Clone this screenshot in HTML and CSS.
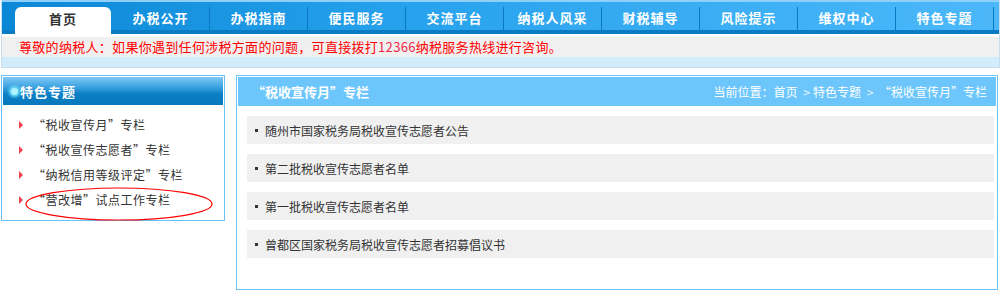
FILE: index.html
```html
<!DOCTYPE html>
<html lang="zh-CN">
<head>
    <meta charset="UTF-8">
    <title>特色专题 - “税收宣传月”专栏</title>
    <link rel="stylesheet" href="styles.css">
</head>
<body>
    <div class="header">
        <ul class="nav">
            <li class="active">首页</li>
            <li>办税公开</li>
            <li>办税指南</li>
            <li>便民服务</li>
            <li>交流平台</li>
            <li>纳税人风采</li>
            <li>财税辅导</li>
            <li>风险提示</li>
            <li>维权中心</li>
            <li>特色专题</li>
        </ul>
        <div class="notice">尊敬的纳税人：如果你遇到任何涉税方面的问题，可直接拨打<span class="hotline">12366</span>纳税服务热线进行咨询。</div>
        <div class="notice-strip"></div>
    </div>

    <div class="main">
        <div class="side">
            <div class="side-title"><span class="dot"></span>特色专题</div>
            <ul class="side-list">
                <li>“税收宣传月”专栏</li>
                <li>“税收宣传志愿者”专栏</li>
                <li>“纳税信用等级评定”专栏</li>
                <li class="marked">“营改增”试点工作专栏
                    <svg class="circle" width="190" height="36" viewBox="0 0 190 36">
                        <ellipse cx="95" cy="18" rx="93" ry="16" fill="none" stroke="#f00" stroke-width="1.2"/>
                    </svg>
                </li>
            </ul>
        </div>

        <div class="content">
            <div class="content-title">
                <span class="title">“税收宣传月”专栏</span>
                <span class="crumb">当前位置：首页 <span class="sep">&gt;</span>特色专题 <span class="sep">&gt;</span> “税收宣传月”专栏</span>
            </div>
            <ul class="article-list">
                <li>随州市国家税务局税收宣传志愿者公告</li>
                <li>第二批税收宣传志愿者名单</li>
                <li>第一批税收宣传志愿者名单</li>
                <li>曾都区国家税务局税收宣传志愿者招募倡议书</li>
            </ul>
        </div>
    </div>
</body>
</html>
```

FILE: styles.css
```css
/* page */
body {
    margin: 0;
    width: 1001px;
    font-family: "Noto Sans CJK SC", "Liberation Sans", sans-serif;
    font-size: 12px;
    color: #333;
    background: #fff;
}

ul {
    margin: 0;
    padding: 0;
    list-style: none;
}

/* top navigation */
.header {
    margin: 0 1px;
    border: 1px solid #c6dcf0;
    border-top: none;
}

.nav {
    display: flex;
    height: 23px;
    padding: 5px 0 0 13px;
    background: linear-gradient(to right, #0a88d6, #2aa4ee 45%, #4cb8fa);
    border-top: 2px solid #8fd0fa;
    border-bottom: 4px solid #0b7cc4;
}

.nav li {
    width: 97px;
    border-right: 1px solid #0a78c0;
    color: #fff;
    font-size: 13px;
    font-weight: bold;
    letter-spacing: 1px;
    text-align: center;
    line-height: 21px;
}

.nav li.active {
    width: 96px;
    height: 27px;
    margin-right: 1px;
    margin-bottom: -4px;
    line-height: 24px;
    background: #fff;
    color: #333;
    border-radius: 6px 6px 0 0;
    border-right: none;
}

.notice {
    height: 20px;
    line-height: 20px;
    padding-left: 17px;
    margin-top: 3px;
    background: #f0f0f0;
    color: #f00;
    font-size: 13px;
    letter-spacing: 0.3px;
}

.hotline {
    color: #f02848;
}

.notice-strip {
    height: 10px;
    background: #d3ecfb;
}

/* body columns */
.main {
    display: flex;
    gap: 11px;
    margin-top: 7px;
    padding-left: 1px;
}

.side {
    width: 222px;
    height: 144px;
    border: 1px solid #6cc0f8;
}

.side-title {
    display: flex;
    align-items: center;
    height: 28px;
    margin: 1px;
    padding-left: 8px;
    background: linear-gradient(to bottom, #7ec8f4 0%, #3ea4e2 35%, #0b80c6 60%, #0878ba 100%);
    color: #fff;
    font-size: 13px;
    font-weight: bold;
    letter-spacing: 1px;
}

.dot {
    width: 7px;
    height: 7px;
    margin-right: 2px;
    border-radius: 50%;
    background: #aef4ff;
    box-shadow: 0 0 3px 2px #6ee0fa;
}

.side-list {
    padding: 10px 0 0 17px;
}

.side-list li {
    position: relative;
    height: 25px;
    padding-left: 14px;
    line-height: 18px;
    letter-spacing: 0.5px;
}

.side-list li::before {
    content: "";
    position: absolute;
    left: 0;
    top: 5px;
    border-left: 4px solid #f0404a;
    border-top: 4px solid transparent;
    border-bottom: 4px solid transparent;
}

.circle {
    position: absolute;
    left: 5px;
    top: -5px;
}

.content {
    width: 758px;
    height: 211px;
    padding: 1px;
    border: 1px solid #6cc4fa;
}

.content-title {
    display: flex;
    justify-content: space-between;
    align-items: center;
    height: 29px;
    padding: 0 9px 0 14px;
    background: #6cc6fc;
    color: #fff;
}

.content-title .title {
    font-size: 13px;
    font-weight: bold;
}

.crumb .sep {
    margin: 0 3px;
    color: #e8f4fc;
}

.article-list {
    padding: 10px 2px 0 9px;
}

.article-list li {
    display: flex;
    align-items: center;
    height: 28px;
    margin-bottom: 10px;
    padding-left: 8px;
    background: #f0f0f0;
}

.article-list li::before {
    content: "";
    width: 3px;
    height: 3px;
    margin-right: 7px;
    background: #333;
}
```
